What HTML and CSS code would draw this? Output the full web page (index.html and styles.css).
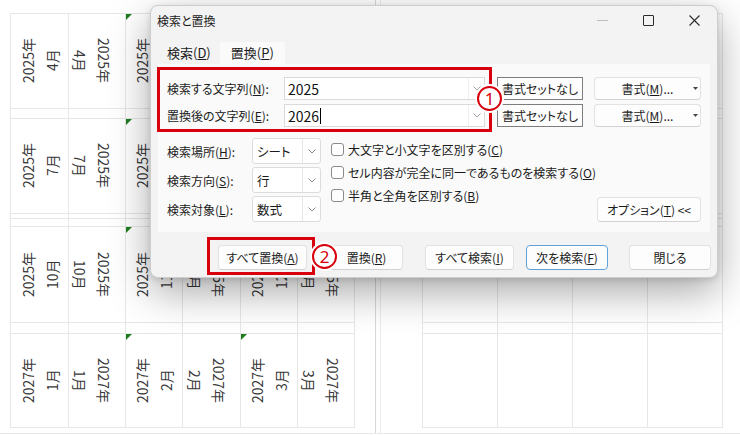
FILE: index.html
```html
<!DOCTYPE html>
<html lang="ja">
<head>
  <meta charset="UTF-8" />
  <title>検索と置換</title>
  <link rel="stylesheet" href="styles.css">
</head>
<body>
  <div class="sheet">
    <div class="page page-left">
      <div class="cell up"><div class="lbl">2025年<br>4月</div></div>
      <div class="cell down"><div class="lbl">2025年<br>4月</div></div>
      <div class="cell up flag"><div class="lbl">2025年<br>5月</div></div>
      <div class="cell down"><div class="lbl">2025年<br>5月</div></div>
      <div class="cell up flag"><div class="lbl">2025年<br>6月</div></div>
      <div class="cell down"><div class="lbl">2025年<br>6月</div></div>

      <div class="cell"></div><div class="cell"></div><div class="cell"></div>
      <div class="cell"></div><div class="cell"></div><div class="cell"></div>

      <div class="cell up"><div class="lbl">2025年<br>7月</div></div>
      <div class="cell down"><div class="lbl">2025年<br>7月</div></div>
      <div class="cell up flag"><div class="lbl">2025年<br>8月</div></div>
      <div class="cell down"><div class="lbl">2025年<br>8月</div></div>
      <div class="cell up flag"><div class="lbl">2025年<br>9月</div></div>
      <div class="cell down"><div class="lbl">2025年<br>9月</div></div>

      <div class="cell"></div><div class="cell"></div><div class="cell"></div>
      <div class="cell"></div><div class="cell"></div><div class="cell"></div>
      <div class="cell"></div><div class="cell"></div><div class="cell"></div>
      <div class="cell"></div><div class="cell"></div><div class="cell"></div>

      <div class="cell up"><div class="lbl">2025年<br>10月</div></div>
      <div class="cell down"><div class="lbl">2025年<br>10月</div></div>
      <div class="cell up flag"><div class="lbl">2025年<br>11月</div></div>
      <div class="cell down"><div class="lbl">2025年<br>11月</div></div>
      <div class="cell up flag"><div class="lbl">2025年<br>12月</div></div>
      <div class="cell down"><div class="lbl">2025年<br>12月</div></div>

      <div class="cell"></div><div class="cell"></div><div class="cell"></div>
      <div class="cell"></div><div class="cell"></div><div class="cell"></div>

      <div class="cell up"><div class="lbl">2027年<br>1月</div></div>
      <div class="cell down"><div class="lbl">2027年<br>1月</div></div>
      <div class="cell up flag"><div class="lbl">2027年<br>2月</div></div>
      <div class="cell down"><div class="lbl">2027年<br>2月</div></div>
      <div class="cell up flag"><div class="lbl">2027年<br>3月</div></div>
      <div class="cell down"><div class="lbl">2027年<br>3月</div></div>
    </div>

    <div class="page-break"></div>

    <div class="page page-right">
      <div class="cell"></div><div class="cell"></div><div class="cell"></div><div class="cell"></div>
      <div class="cell"></div><div class="cell"></div><div class="cell"></div><div class="cell"></div>
      <div class="cell"></div><div class="cell"></div><div class="cell"></div><div class="cell"></div>
      <div class="cell"></div><div class="cell"></div><div class="cell"></div><div class="cell"></div>
      <div class="cell"></div><div class="cell"></div><div class="cell"></div><div class="cell"></div>
      <div class="cell"></div><div class="cell"></div><div class="cell"></div><div class="cell"></div>
      <div class="cell"></div><div class="cell"></div><div class="cell"></div><div class="cell"></div>
      <div class="cell"></div><div class="cell"></div><div class="cell"></div><div class="cell"></div>
    </div>
  </div>

  <div class="dialog">
    <div class="titlebar">
      <span class="title">検索と置換</span>
      <div class="win-btns">
        <span class="wb"><span class="ic-min"></span></span>
        <span class="wb"><span class="ic-max"></span></span>
        <span class="wb">
          <svg width="11" height="11" viewBox="0 0 11 11"><path d="M0.5 0.5L10.5 10.5M10.5 0.5L0.5 10.5" stroke="#2b2b2b" stroke-width="1.1" fill="none"/></svg>
        </span>
      </div>
    </div>

    <div class="tabs">
      <div class="tab">検索(<u>D</u>)</div>
      <div class="tab active">置換(<u>P</u>)</div>
    </div>

    <div class="panel">
      <div class="top">
        <div class="mark mark-find">
          <div class="field">
            <label>検索する文字列(<u>N</u>):</label>
            <div class="combo">2025<span class="drop"><svg width="8" height="5" viewBox="0 0 8 5"><path d="M0.5 0.5L4 4L7.5 0.5" fill="none" stroke="#a0a0a0"/></svg></span></div>
          </div>
          <div class="field">
            <label>置換後の文字列(<u>E</u>):</label>
            <div class="combo">2026<span class="text-caret"></span><span class="drop"><svg width="8" height="5" viewBox="0 0 8 5"><path d="M0.5 0.5L4 4L7.5 0.5" fill="none" stroke="#a0a0a0"/></svg></span></div>
          </div>
          <span class="badge b1">1</span>
        </div>

        <div class="fmt">
          <div class="fmt-row">
            <button class="btn btn-plain">書式セットなし</button>
            <button class="btn btn-fmt"><span></span><span>書式(<u>M</u>)...</span><span class="tri"><svg width="5" height="3" viewBox="0 0 5 3"><path d="M0 0H5L2.5 3Z" fill="#444"/></svg></span></button>
          </div>
          <div class="fmt-row">
            <button class="btn btn-plain">書式セットなし</button>
            <button class="btn btn-fmt"><span></span><span>書式(<u>M</u>)...</span><span class="tri"><svg width="5" height="3" viewBox="0 0 5 3"><path d="M0 0H5L2.5 3Z" fill="#444"/></svg></span></button>
          </div>
        </div>
      </div>

      <div class="lower">
        <div class="sel-col">
          <div class="sel-row">
            <label>検索場所(<u>H</u>):</label>
            <div class="select">シート<span class="drop"><svg width="8" height="5" viewBox="0 0 8 5"><path d="M0.5 0.5L4 4L7.5 0.5" fill="none" stroke="#8a8a8a"/></svg></span></div>
          </div>
          <div class="sel-row">
            <label>検索方向(<u>S</u>):</label>
            <div class="select">行<span class="drop"><svg width="8" height="5" viewBox="0 0 8 5"><path d="M0.5 0.5L4 4L7.5 0.5" fill="none" stroke="#8a8a8a"/></svg></span></div>
          </div>
          <div class="sel-row">
            <label>検索対象(<u>L</u>):</label>
            <div class="select">数式<span class="drop"><svg width="8" height="5" viewBox="0 0 8 5"><path d="M0.5 0.5L4 4L7.5 0.5" fill="none" stroke="#8a8a8a"/></svg></span></div>
          </div>
        </div>

        <div class="checks">
          <div class="check"><span class="box"></span>大文字と小文字を区別する(<u>C</u>)</div>
          <div class="check"><span class="box"></span>セル内容が完全に同一であるものを検索する(<u>O</u>)</div>
          <div class="check"><span class="box"></span>半角と全角を区別する(<u>B</u>)</div>
        </div>

        <button class="btn btn-opt">オプション(<u>T</u>) &lt;&lt;</button>
      </div>
    </div>

    <div class="actions">
      <div class="mark mark-all">
        <button class="btn btn-all">すべて置換(<u>A</u>)</button>
        <span class="badge b2">2</span>
      </div>
      <button class="btn btn-one">置換(<u>R</u>)</button>
      <button class="btn btn-findall">すべて検索(<u>I</u>)</button>
      <button class="btn btn-next">次を検索(<u>F</u>)</button>
      <button class="btn btn-close">閉じる</button>
    </div>
  </div>
</body>
</html>
```

FILE: styles.css
```css
* {
  box-sizing: border-box;
  margin: 0;
  padding: 0;
}

body {
  width: 740px;
  height: 435px;
  overflow: hidden;
  position: relative;
  background: #fff;
  font-family: "Noto Sans CJK JP", "Noto Sans", sans-serif;
}

/* spreadsheet behind the dialog */
.sheet {
  display: flex;
  height: 434px;
  border-bottom: 1px solid #e8e8e8;
}

.page {
  display: grid;
  grid-template-rows: 94px 9px 94px 4px 7px 95px 10px 93px;
  gap: 1px;
  padding: 1px;
  margin-top: 13px;
  align-self: flex-start;
  background: #e7e7e7;
}

.page-left {
  margin-left: 10px;
  grid-template-columns: 57px 56px 56px 57px 56px 56px;
}

.page-right {
  margin-left: 41px;
  grid-template-columns: repeat(4, 74px);
}

.page-break {
  margin-left: 20px;
  width: 6px;
  border-left: 1px solid #d8d8d8;
  border-right: 1px solid #ebebeb;
}

.cell {
  position: relative;
  display: flex;
  align-items: center;
  justify-content: center;
  background: #fff;
}

.flag::before {
  content: "";
  position: absolute;
  left: 0;
  top: 0;
  border-top: 6px solid #1d7d1d;
  border-right: 6px solid transparent;
}

.lbl {
  writing-mode: vertical-rl;
  text-orientation: sideways;
  text-align: center;
  font-size: 14px;
  line-height: 24px;
  color: #383838;
}

.up .lbl {
  transform: rotate(180deg);
}

.down {
  padding-right: 10px;
}

/* find & replace dialog */
.dialog {
  position: absolute;
  left: 150px;
  top: 5px;
  width: 568px;
  height: 273px;
  background: #f3f3f3;
  border: 1px solid #cdcdcd;
  border-radius: 8px;
  box-shadow: 0 14px 40px rgba(0, 0, 0, 0.34), 0 2px 6px rgba(0, 0, 0, 0.12);
  font-size: 12px;
  color: #1b1b1b;
  font-feature-settings: "palt";
}

.titlebar {
  display: flex;
  align-items: center;
  height: 28px;
  padding-left: 6px;
}

.title {
  flex: 1;
}

.win-btns {
  display: flex;
  margin-top: 1px;
}

.wb {
  width: 46px;
  height: 28px;
  display: flex;
  align-items: center;
  justify-content: center;
}

.ic-min {
  width: 11px;
  height: 1px;
  background: #bdbdbd;
}

.ic-max {
  width: 11px;
  height: 11px;
  border: 1px solid #2b2b2b;
  border-radius: 1px;
}

.tabs {
  display: flex;
  height: 22px;
  margin: 8px 0 0 7px;
  font-size: 13px;
}

.tab {
  padding: 0 9px;
  line-height: 22px;
}

.tab.active {
  padding: 0 11px;
  background: #fafafa;
}

.panel {
  height: 168px;
  margin: 0 7px;
  background: #fafafa;
}

.top {
  display: flex;
  align-items: flex-start;
  padding-top: 3px;
}

.mark {
  position: relative;
  border: 3px solid #d8000c;
}

.mark-find {
  width: 335px;
  margin-left: -1px;
  padding: 7px 4px 2px 7px;
  display: flex;
  flex-direction: column;
  gap: 4px;
}

.field {
  display: flex;
  align-items: center;
  height: 23px;
}

.field label {
  width: 117px;
}

.combo {
  display: flex;
  align-items: center;
  width: 201px;
  height: 23px;
  padding-left: 3px;
  background: #fff;
  border: 1px solid #dadada;
  font-size: 14px;
  color: #111;
}

.text-caret {
  width: 1px;
  height: 16px;
  margin-left: 1px;
  background: #000;
}

.drop {
  display: flex;
  align-items: center;
  justify-content: center;
  width: 16px;
  height: 100%;
  margin-left: auto;
  border-left: 1px solid #efefef;
}

.badge {
  position: absolute;
  z-index: 2;
  width: 25px;
  height: 25px;
  display: flex;
  align-items: center;
  justify-content: center;
  border: 2px solid #d8000c;
  border-radius: 50%;
  background: #fff;
  box-shadow: 0 0 0 2px #fff;
  color: #d8000c;
  font-family: "Noto Sans", sans-serif;
  font-size: 17px;
  line-height: 1;
}

.b1 {
  left: 317px;
  top: 16px;
}

.b2 {
  left: 102px;
  top: 4px;
}

.fmt {
  display: flex;
  flex-direction: column;
  gap: 4px;
  margin-left: 5px;
  padding-top: 10px;
}

.fmt-row {
  display: flex;
  gap: 11px;
}

.btn {
  height: 25px;
  background: #fdfdfd;
  border: 1px solid #e2e2e2;
  border-bottom-color: #d2d2d2;
  border-radius: 4px;
  font-family: inherit;
  font-size: 12px;
  font-feature-settings: "palt";
  color: #1b1b1b;
}

.btn-plain {
  width: 86px;
  height: 23px;
  border: 1px solid #7d7d7d;
  border-radius: 0;
}

.btn-fmt {
  width: 107px;
  height: 23px;
  display: grid;
  grid-template-columns: 1fr auto 1fr;
  align-items: center;
}

.tri {
  justify-self: end;
  display: flex;
  padding-right: 2px;
}

.lower {
  display: flex;
  padding: 6px 9px 10px 9px;
}

.sel-col {
  display: flex;
  flex-direction: column;
  gap: 3px;
}

.sel-row {
  display: flex;
  align-items: center;
  height: 26px;
}

.sel-row label {
  width: 85px;
}

.select {
  display: flex;
  align-items: center;
  width: 69px;
  height: 26px;
  padding-left: 4px;
  background: #fff;
  border: 1px solid #dcdcdc;
  border-radius: 3px;
  font-size: 12.5px;
}

.select .drop {
  width: 18px;
  border-left: 1px solid #e6e6e6;
}

.checks {
  display: flex;
  flex-direction: column;
  margin-left: 10px;
}

.check {
  display: flex;
  align-items: center;
  height: 23px;
}

.box {
  width: 13px;
  height: 13px;
  margin-right: 4px;
  background: #fff;
  border: 1px solid #8a8a8a;
  border-radius: 3px;
}

.btn-opt {
  width: 104px;
  margin-left: auto;
  align-self: flex-end;
}

.actions {
  display: flex;
  align-items: flex-start;
  margin: 5px 0 0 56px;
}

.mark-all {
  width: 108px;
  height: 38px;
  padding: 5px 5px 2px 8px;
}

.btn-all {
  width: 89px;
}

.btn-one,
.btn-findall,
.btn-next,
.btn-close {
  margin-top: 8px;
}

.btn-one {
  width: 73px;
  margin-left: 15px;
}

.btn-findall {
  width: 89px;
  margin-left: 22px;
}

.btn-next {
  width: 82px;
  margin-left: 12px;
  border: 1px solid #5fa2db;
}

.btn-close {
  width: 82px;
  margin-left: 21px;
}
```
